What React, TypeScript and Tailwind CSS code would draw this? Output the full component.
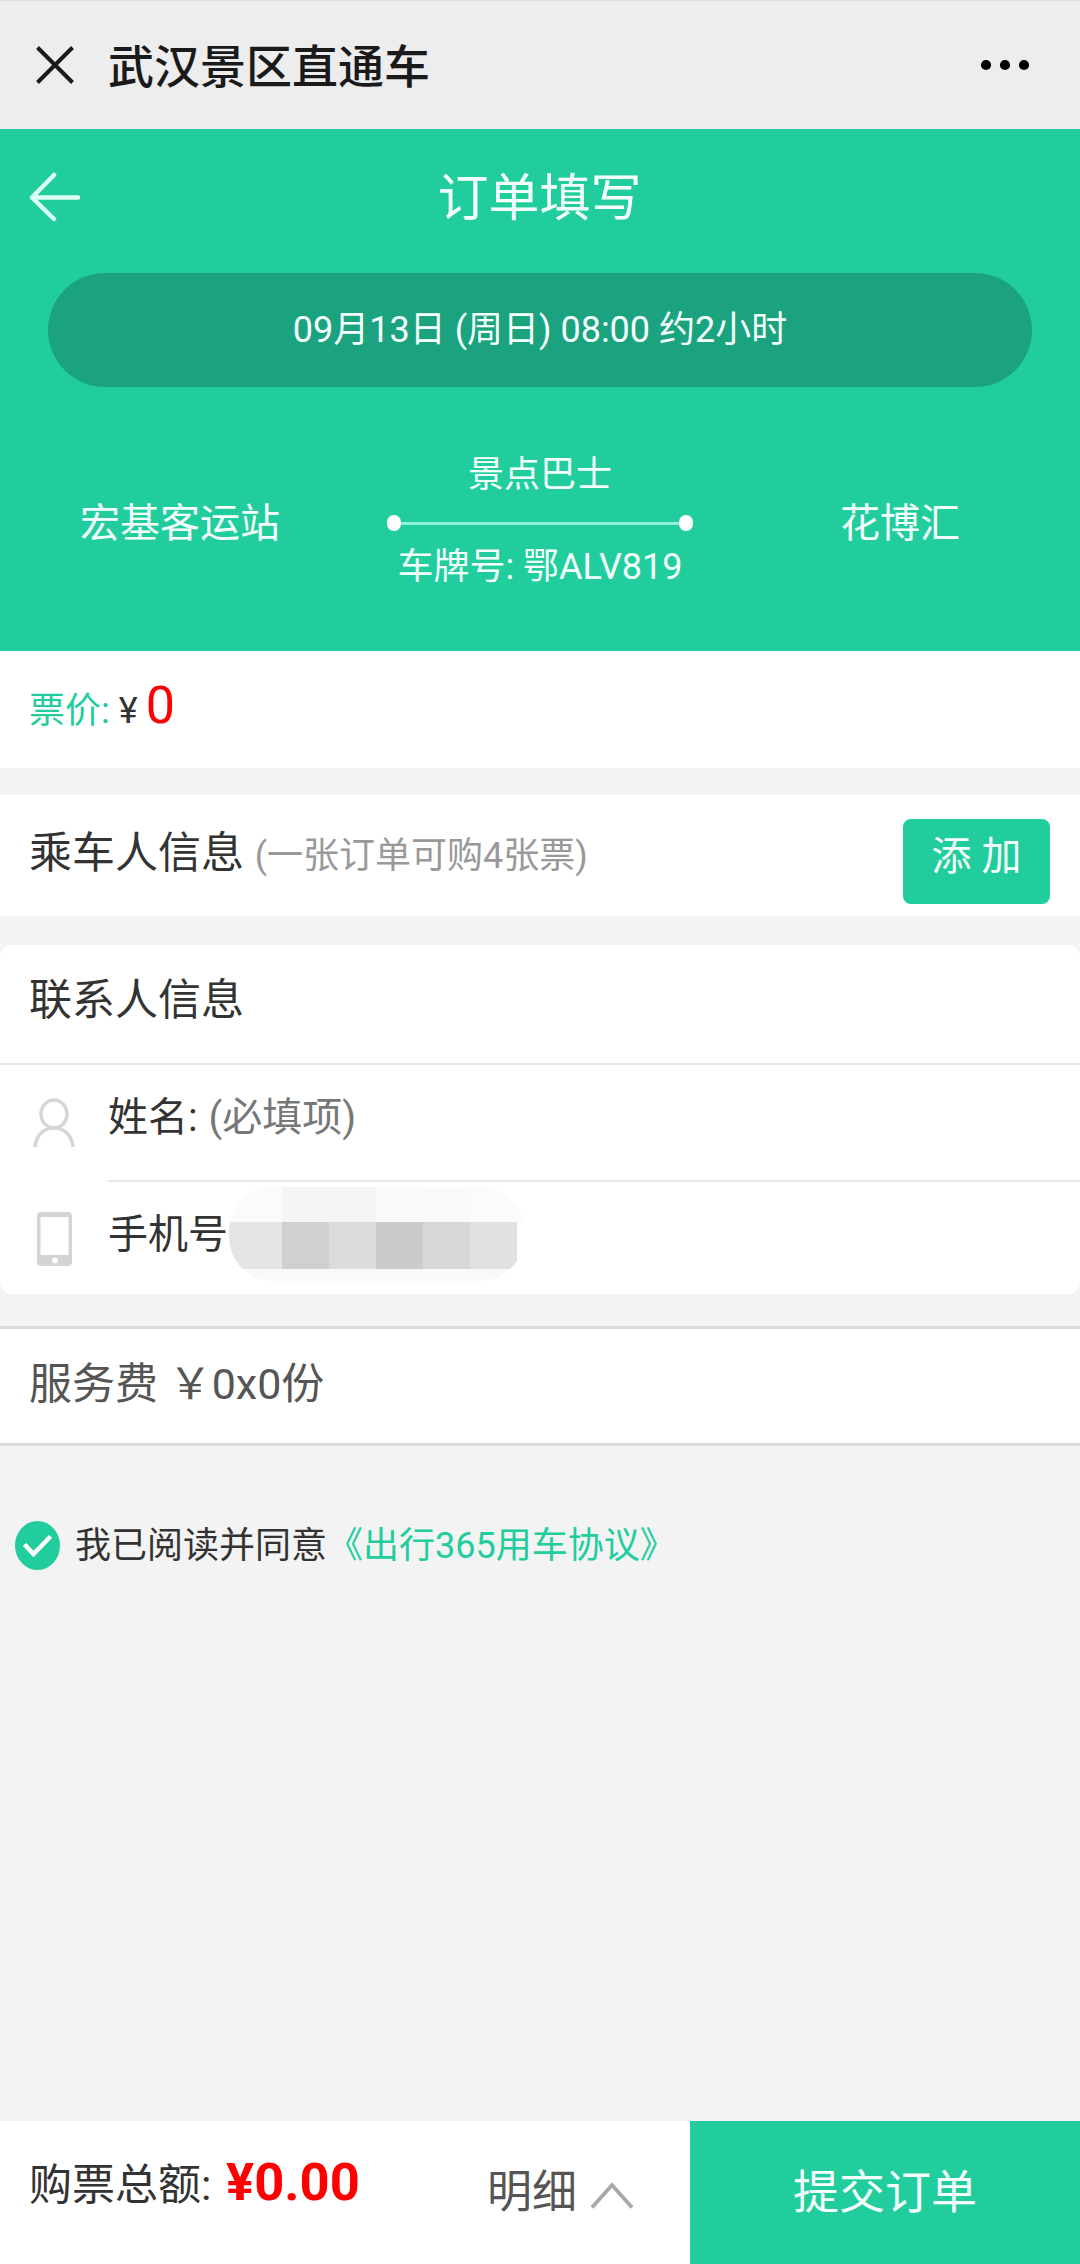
import type { ReactNode } from "react";

const MASK_TOP = ["bg-[#fbfbfb]", "bg-[#f5f5f5]", "bg-[#f5f5f5]", "bg-[#fafafa]", "bg-[#f9f9f9]", "bg-[#fbfbfb]"];
const MASK_MID = ["bg-[#e5e5e5]", "bg-[#d0d0d0]", "bg-[#dcdcdc]", "bg-[#cbcbcb]", "bg-[#d8d8d8]", "bg-[#e1e1e1]"];

function CloseIcon() {
  return (
    <svg className="h-[38px] w-[38px]" viewBox="0 0 38 38" fill="none" stroke="#1a1a1a" strokeWidth="4">
      <path d="M1.5 1.5L36.5 36.5M36.5 1.5L1.5 36.5" />
    </svg>
  );
}

function MoreIcon() {
  return (
    <svg className="h-3 w-[50px]" viewBox="0 0 50 12" fill="#000">
      <circle cx="6" cy="6" r="5.1" />
      <circle cx="25" cy="6" r="5.1" />
      <circle cx="44" cy="6" r="5.1" />
    </svg>
  );
}

function BackIcon() {
  return (
    <svg
      className="h-[50px] w-[52px]"
      viewBox="0 0 52 50"
      fill="none"
      stroke="#dcfff5"
      strokeWidth="4.5"
      strokeLinecap="round"
      strokeLinejoin="round"
    >
      <path d="M25 3L3 25.5L25 47M3 25.5H49" />
    </svg>
  );
}

function UserIcon() {
  return (
    <svg className="h-[50px] w-11" viewBox="0 0 44 50" fill="none" stroke="#d6d6d6" strokeWidth="3.6">
      <ellipse cx="22" cy="16" rx="13" ry="14" />
      <path d="M3 49C4 37 12 30 22 30S40 37 41 49" />
    </svg>
  );
}

function PhoneIcon() {
  return (
    <svg className="h-[54px] w-[35px]" viewBox="0 0 35 54">
      <path
        fill="#d4d4d4"
        fillRule="evenodd"
        d="M4 0H31Q35 0 35 4V50Q35 54 31 54H4Q0 54 0 50V4Q0 0 4 0ZM3.5 5V43H31.5V5Z"
      />
      <circle cx="18" cy="48.5" r="3" fill="#fff" />
    </svg>
  );
}

function CheckIcon() {
  return (
    <svg className="h-[49px] w-[45px]" viewBox="0 0 45 49" fill="none">
      <ellipse cx="22.5" cy="24.5" rx="22.5" ry="24.5" fill="#21cd9d" />
      <path d="M9.5 23.5L18.5 33L35.5 15.5" stroke="#fff" strokeWidth="4.5" />
    </svg>
  );
}

function ChevronUp() {
  return (
    <svg className="h-7 w-11" viewBox="0 0 44 28" fill="none" stroke="#a8a8a8" strokeWidth="3.8">
      <path d="M2 26.5L22 4L42 26.5" />
    </svg>
  );
}

function MaskedPhone() {
  return (
    <div className="mt-[5px] h-[94px] w-[295px] overflow-hidden rounded-[44px] bg-[#f9f9f9]">
      <div className="flex h-[35px] bg-[#fcfcfc]">
        {MASK_TOP.map((color, i) => (
          <span key={i} className={`h-full w-[47px] first:w-[53px] ${color}`} />
        ))}
      </div>
      <div className="flex h-[47px] bg-white">
        {MASK_MID.map((color, i) => (
          <span key={i} className={`h-full w-[47px] first:w-[53px] ${color}`} />
        ))}
      </div>
    </div>
  );
}

function Station({ children }: { children: ReactNode }) {
  return <div className="w-[360px] pt-[47px] text-center text-[40px] leading-[48px]">{children}</div>;
}

export default function App() {
  return (
    <div className="flex h-[2264px] w-[1080px] flex-col overflow-hidden bg-[#f3f3f3] font-['Roboto','Noto_Sans_CJK_SC',sans-serif] text-[#333]">
      <header className="flex h-[129px] shrink-0 items-center border-t border-[#dcdcdc] bg-[#ededed] pr-[50px] pl-9">
        <CloseIcon />
        <h1 className="ml-[34px] flex-1 pt-[3px] text-[46px] leading-[60px] font-medium text-[#1a1a1a]">武汉景区直通车</h1>
        <MoreIcon />
      </header>

      <section className="h-[522px] shrink-0 bg-[#21cd9d] text-[#f4fffc]">
        <div className="flex h-[144px] items-start pt-[38px] pl-[29px]">
          <div className="pt-[5px]">
            <BackIcon />
          </div>
          <h2 className="flex-1 pr-[82px] text-center text-[51px] leading-[64px]">订单填写</h2>
        </div>
        <div className="mx-12 flex h-[114px] items-center justify-center rounded-full bg-[#1ba37f] text-[36px]">
          09月13日 (周日) 08:00 约2小时
        </div>
        <div className="flex pt-[66px]">
          <Station>宏基客运站</Station>
          <div className="w-[360px] text-center text-[36px] leading-[44px]">
            <p>景点巴士</p>
            <div className="mx-[27px] mt-[18px] mb-[14px] flex h-4 items-center">
              <span className="h-4 w-[14px] rounded-full bg-white" />
              <span className="h-[3px] flex-1 bg-[#8ff5d9]" />
              <span className="h-4 w-[14px] rounded-full bg-white" />
            </div>
            <p>车牌号: 鄂ALV819</p>
          </div>
          <Station>花博汇</Station>
        </div>
      </section>

      <section className="flex h-[117px] shrink-0 items-baseline bg-white pt-[25px] pl-[29px] text-[36px] leading-[60px]">
        <span className="text-[#21cd9d]">票价:</span>
        <span className="ml-[9px]">¥</span>
        <span className="ml-[8px] text-[52px] text-[#f00]">0</span>
      </section>

      <section className="mt-[27px] flex h-[121px] shrink-0 justify-between bg-white pr-[30px] pl-[29px]">
        <p className="pt-[28px] text-[43px] leading-[60px]">
          乘车人信息 <span className="text-[36px] text-[#999]">(一张订单可购4张票)</span>
        </p>
        <button className="mt-6 flex h-[85px] w-[147px] justify-center rounded-lg bg-[#21cd9d] pt-[14px] text-[40px] leading-[48px] text-[#f4fffc]">
          添 加
        </button>
      </section>

      <section className="mt-[29px] h-[349px] shrink-0 rounded-xl bg-white">
        <h3 className="h-[118px] pt-[25px] pl-[29px] text-[43px] leading-[60px]">联系人信息</h3>
        <div className="flex h-[117px] border-t-2 border-[#e8e8e8] pl-8 text-[40px]">
          <div className="w-[76px] pt-[33px]">
            <UserIcon />
          </div>
          <p className="flex-1 pt-[23px] leading-[60px]">
            姓名: <span className="ml-[1px] text-[#777]">(必填项)</span>
          </p>
        </div>
        <div className="flex h-[114px] pl-[37px] text-[40px]">
          <div className="w-[71px] pt-[32px]">
            <PhoneIcon />
          </div>
          <div className="flex flex-1 border-t-2 border-[#e8e8e8]">
            <p className="w-[121px] pt-[23px] leading-[60px]">手机号</p>
            <MaskedPhone />
          </div>
        </div>
      </section>

      <section className="mt-8 h-[120px] shrink-0 border-y-[3px] border-[#dcdcdc] bg-white pt-[25px] pl-[29px] text-[43px] leading-[60px] text-[#555]">
        服务费 ￥0x0份
      </section>

      <div className="flex items-center pt-[74px] pl-[15px] text-[36px] leading-[50px]">
        <CheckIcon />
        <p className="ml-[15px] pt-px">
          我已阅读并同意<span className="text-[#21cd9d]">《出行365用车协议》</span>
        </p>
      </div>

      <footer className="mt-auto flex h-[143px] shrink-0 bg-white">
        <p className="flex-1 pt-[31px] pl-[29px] text-[43px] leading-[60px]">
          购票总额: <span className="ml-[4px] text-[52.5px] font-bold text-[#f00]">¥0.00</span>
        </p>
        <div className="flex w-[203px] items-center text-[45px] text-[#555]">
          <span className="leading-[60px]">明细</span>
          <span className="ml-[13px] pt-1">
            <ChevronUp />
          </span>
        </div>
        <button className="w-[390px] bg-[#21cd9d] text-[46px] text-[#f4fffc]">提交订单</button>
      </footer>
    </div>
  );
}
